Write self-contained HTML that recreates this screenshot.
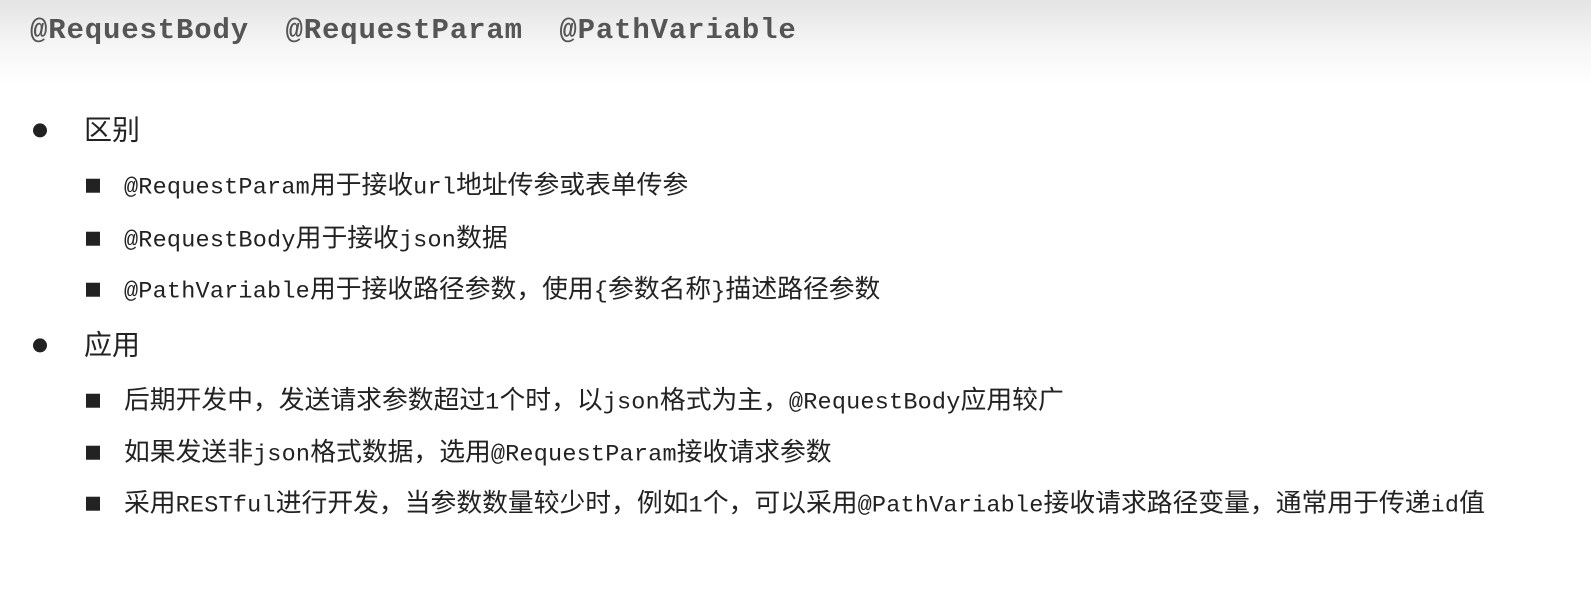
<!DOCTYPE html>
<html><head><meta charset="utf-8"><style>
body{margin:0;width:1591px;height:595px;background:#fff;position:relative;overflow:hidden;font-family:"Liberation Sans","Noto Sans CJK SC",sans-serif;color:#222}
.hdr{position:absolute;left:0;top:0;width:1591px;height:85px;background:linear-gradient(#e4e4e4,#f6f6f6 55%,#fff)}
.title{position:absolute;left:30px;top:14px;font:bold 29px "Liberation Mono",monospace;color:#555;white-space:pre;letter-spacing:0.85px}
.l1,.l2{position:absolute;white-space:nowrap;line-height:1}
.l1{left:84px;font-size:28px;transform:translateY(-45%)}
.l1:before{content:"";position:absolute;left:-51px;top:50%;margin-top:-7px;width:14px;height:14px;border-radius:50%;background:#222}
.l2{left:124px;font-size:25.8px;transform:translateY(-35%)}
.l2:before{content:"";position:absolute;left:-38px;top:50%;margin-top:-8px;width:14px;height:14px;background:#222}
.m{font-family:"Liberation Mono",monospace;font-size:23.5px;letter-spacing:0.2px}
</style></head><body>
<div class="hdr"></div>
<div class="title">@RequestBody  @RequestParam  @PathVariable</div>
<div class="l1" style="top:129px">区别</div>
<div class="l2" style="top:183px"><span class="m">@RequestParam</span>用于接收<span class="m">url</span>地址传参或表单传参</div>
<div class="l2" style="top:236px"><span class="m">@RequestBody</span>用于接收<span class="m">json</span>数据</div>
<div class="l2" style="top:287px"><span class="m">@PathVariable</span>用于接收路径参数，使用<span class="m">{</span>参数名称<span class="m">}</span>描述路径参数</div>
<div class="l1" style="top:344px">应用</div>
<div class="l2" style="top:398px">后期开发中，发送请求参数超过<span class="m">1</span>个时，以<span class="m">json</span>格式为主，<span class="m">@RequestBody</span>应用较广</div>
<div class="l2" style="top:450px">如果发送非<span class="m">json</span>格式数据，选用<span class="m">@RequestParam</span>接收请求参数</div>
<div class="l2" style="top:501px">采用<span class="m">RESTful</span>进行开发，当参数数量较少时，例如<span class="m">1</span>个，可以采用<span class="m">@PathVariable</span>接收请求路径变量，通常用于传递<span class="m">id</span>值</div>
</body></html>
